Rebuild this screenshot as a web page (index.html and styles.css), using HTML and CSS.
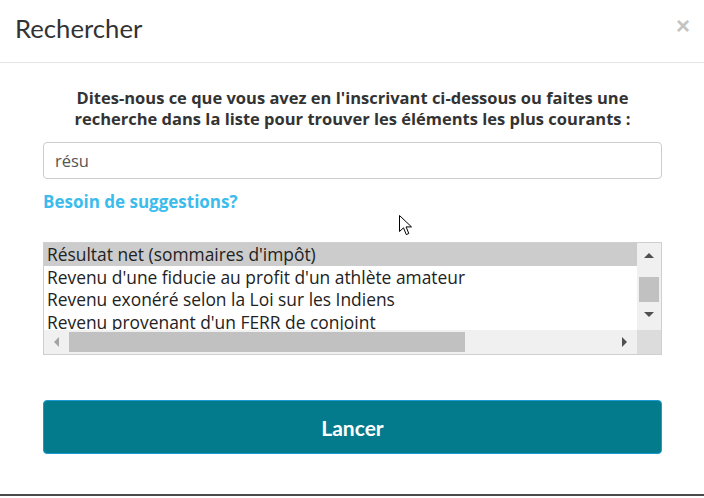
FILE: index.html
```html
<!DOCTYPE html>
<html lang="fr">
<head>
<meta charset="utf-8">
<title>Rechercher</title>
<link rel="stylesheet" href="styles.css">
</head>
<body>
<div class="modal">
  <header class="modal-header">
    <h1 class="modal-title">Rechercher</h1>
    <button class="close" aria-label="Fermer">×</button>
  </header>
  <div class="modal-body">
    <p class="intro">Dites-nous ce que vous avez en l'inscrivant ci-dessous ou faites une recherche dans la liste pour trouver les éléments les plus courants :</p>
    <div class="search-box">résu</div>
    <a class="suggest">Besoin de suggestions?</a>
    <div class="listbox">
      <div class="list-items">
        <div class="item selected">Résultat net (sommaires d'impôt)</div>
        <div class="item">Revenu d'une fiducie au profit d'un athlète amateur</div>
        <div class="item">Revenu exonéré selon la Loi sur les Indiens</div>
        <div class="item">Revenu provenant d'un FERR de conjoint</div>
      </div>
      <div class="vscroll">
        <span class="arrow up"></span>
        <span class="vthumb-track"><span class="vthumb"></span></span>
        <span class="arrow down"></span>
      </div>
      <div class="hscroll">
        <span class="arrow left"></span>
        <span class="hthumb-track"><span class="hthumb"></span></span>
        <span class="arrow right"></span>
      </div>
      <div class="corner"></div>
    </div>
    <button class="launch">Lancer</button>
  </div>
  <svg class="cursor" width="14" height="22" viewBox="0 0 14 22"><path d="M0.5 0.5 L0.5 16.5 L4.5 12.8 L7.3 19.6 L9.8 18.5 L7.1 11.9 L12.5 11.9 Z" fill="#fff" stroke="#000" stroke-width="1"/></svg>
</div>
</body>
</html>
```
FILE: styles.css
```css
* { box-sizing: border-box; }
html, body { margin: 0; padding: 0; background: #fff; }
body { width: 704px; height: 498px; overflow: hidden; font-family: "Open Sans", "Liberation Sans", sans-serif; }
.modal {
  position: relative;
  width: 704px;
  height: 496px;
  background: #fff;
  border-bottom: 2px solid #4a4a4a;
  display: flex;
  flex-direction: column;
}
.modal-header {
  height: 63px;
  border-bottom: 1px solid #e5e5e5;
  display: flex;
  align-items: center;
  justify-content: space-between;
  padding: 0 14px 6px 15px;
}
.modal-title {
  margin: 0;
  font-family: Lato, sans-serif;
  font-size: 25.7px;
  font-weight: 400;
  color: #333;
}
.close {
  border: 0;
  background: none;
  padding: 0;
  font-family: "Liberation Sans", sans-serif;
  font-size: 24px;
  font-weight: 700;
  color: #c4c4c4;
  line-height: 1;
  margin-top: -4px;
}
.modal-body {
  padding: 24px 42px 0 43px;
  display: flex;
  flex-direction: column;
}
.intro {
  margin: 0 0 13px;
  text-align: center;
  font-weight: 700;
  font-size: 16.5px;
  line-height: 21px;
  color: #333;
  padding: 0 4px;
}
.search-box {
  height: 37px;
  border: 1px solid #ccc;
  border-radius: 4px;
  padding: 0 11px;
  display: flex;
  align-items: center;
  font-size: 16.5px;
  color: #555;
}
.suggest {
  margin-top: 12px;
  font-weight: 700;
  font-size: 17px;
  color: #3cbcec;
  line-height: 22px;
}
.listbox {
  margin-top: 29px;
  width: 619px;
  height: 113px;
  border: 1px solid #cfcfcf;
  display: grid;
  grid-template-columns: 1fr 24px;
  grid-template-rows: 87px 24px;
}
.list-items { overflow: hidden; }
.item {
  height: 22.5px;
  line-height: 22.5px;
  font-size: 17.4px;
  color: #222;
  padding-left: 3px;
  white-space: nowrap;
}
.item.selected { background: #cccccc; }
.vscroll {
  background: #f0f0f0;
  display: flex;
  flex-direction: column;
  align-items: center;
}
.vthumb-track { flex: 1; width: 100%; padding: 19px 2px 0; display: flex; align-items: flex-start; }
.vthumb { width: 100%; height: 25px; background: #c1c1c1; }
.hscroll {
  background: #f0f0f0;
  display: flex;
  align-items: center;
}
.hthumb-track { flex: 1; padding: 0 0 0 10px; height: 100%; display: flex; align-items: center; }
.hthumb { width: 396px; height: 20px; background: #c1c1c1; }
.corner { background: #dcdcdc; }
.arrow { width: 0; height: 0; flex: none; }
.arrow.up { margin-top: 10px; border-left: 5px solid transparent; border-right: 5px solid transparent; border-bottom: 5px solid #505050; }
.arrow.down { margin-bottom: 13px; border-left: 5px solid transparent; border-right: 5px solid transparent; border-top: 5px solid #505050; }
.arrow.left { margin-left: 10px; border-top: 5px solid transparent; border-bottom: 5px solid transparent; border-right: 5px solid #a3a3a3; }
.arrow.right { margin: 0 10px 0 134px; border-top: 5px solid transparent; border-bottom: 5px solid transparent; border-left: 5px solid #505050; }
.launch {
  margin-top: 45px;
  width: 619px;
  height: 54px;
  background: #047b8d;
  border: 1px solid #1c9ad2;
  border-radius: 4px;
  color: #fff;
  font-family: Lato, sans-serif;
  font-weight: 700;
  font-size: 21px;
  padding: 0;
}
.cursor { position: absolute; left: 399px; top: 215px; }
```
